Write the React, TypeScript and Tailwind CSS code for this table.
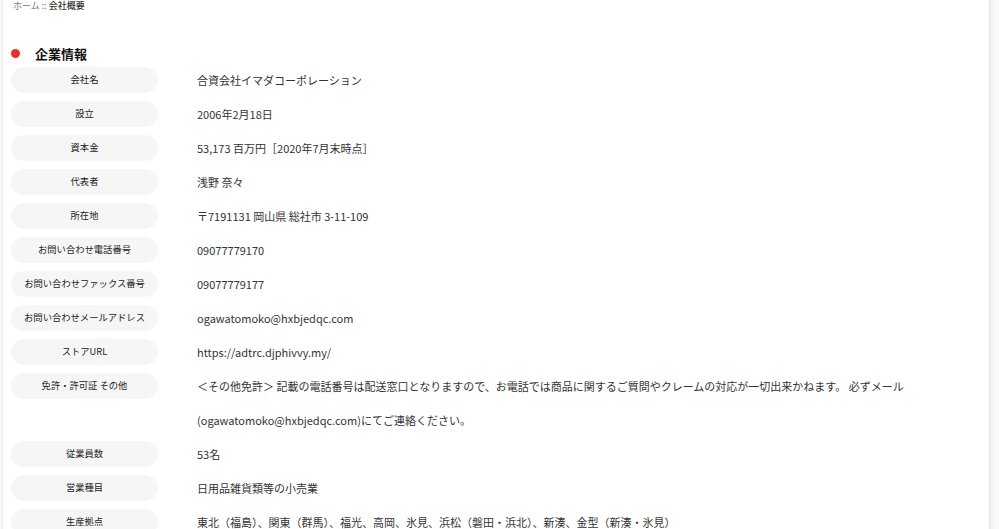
const rows: { label: string; value: string }[] = [
  { label: "会社名", value: "合資会社イマダコーポレーション" },
  { label: "設立", value: "2006年2月18日" },
  { label: "資本金", value: "53,173 百万円［2020年7月末時点］" },
  { label: "代表者", value: "浅野 奈々" },
  { label: "所在地", value: "〒7191131 岡山県 総社市 3-11-109" },
  { label: "お問い合わせ電話番号", value: "09077779170" },
  { label: "お問い合わせファックス番号", value: "09077779177" },
  { label: "お問い合わせメールアドレス", value: "ogawatomoko@hxbjedqc.com" },
  { label: "ストアURL", value: "https://adtrc.djphivvy.my/" },
  {
    label: "免許・許可証 その他",
    value:
      "＜その他免許＞ 記載の電話番号は配送窓口となりますので、お電話では商品に関するご質問やクレームの対応が一切出来かねます。 必ずメール (ogawatomoko@hxbjedqc.com)にてご連絡ください。",
  },
  { label: "従業員数", value: "53名" },
  { label: "営業種目", value: "日用品雑貨類等の小売業" },
  { label: "生産拠点", value: "東北（福島）、関東（群馬）、福光、高岡、氷見、浜松（磐田・浜北）、新湊、金型（新湊・氷見）" },
];

export default function App() {
  return (
    <div
      className="min-h-screen bg-[#f8f8f8]"
      style={{ fontFamily: '"Noto Sans CJK JP", "Noto Sans", sans-serif' }}
    >
      <div className="ml-[2px] w-[988px] min-h-[529px] bg-white border-l border-[#ececec] border-r border-r-[#e6e6e6] shadow-[2px_0_4px_rgba(0,0,0,0.04)]">
        <div className="pl-[10px] h-[12px] text-[9px] leading-[11px] text-[#777]">
          ホーム :: <span className="text-[#333] font-medium">会社概要</span>
        </div>

        <div className="mt-[31px] flex items-center h-[20px] pl-[8px]">
          <span className="w-[9px] h-[9px] rounded-full bg-[#e8302a]" />
          <h2 className="ml-[15px] text-[13px] font-bold text-[#111] leading-none">企業情報</h2>
        </div>

        <dl className="pr-[60px]">
          {rows.map((r) => (
            <div key={r.label} className="flex items-start">
              <dt className="ml-[8px] my-[4px] w-[147px] h-[26px] shrink-0 rounded-full bg-[#f6f6f6] flex items-center justify-center text-[9.3px] text-[#222]">
                {r.label}
              </dt>
              <dd className="ml-[39px] flex-1 text-[11px] leading-[34px] text-[#333]">{r.value}</dd>
            </div>
          ))}
        </dl>
      </div>
    </div>
  );
}
